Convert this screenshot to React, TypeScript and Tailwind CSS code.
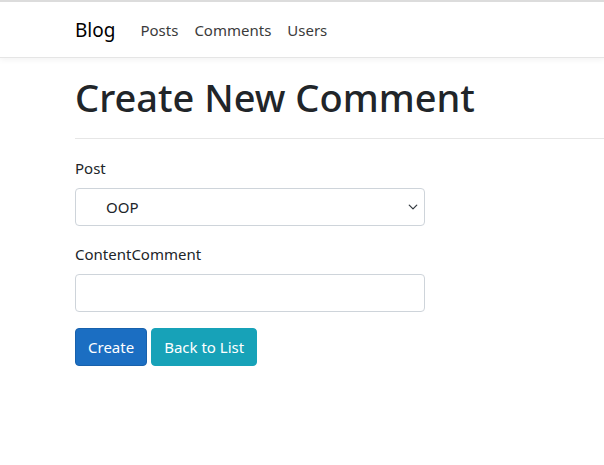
export default function App() {
  return (
    <div className="min-h-screen bg-white text-[#212529]" style={{ fontFamily: '"Noto Sans", "Open Sans", sans-serif' }}>
      {/* Navbar */}
      <header className="border-t-2 border-[#dcdcdc] border-b border-b-[#e5e5e5] shadow-[0_2px_6px_rgba(0,0,0,0.05)] bg-white">
        <nav className="flex items-center h-[55px] pl-[75px] pt-[2px]">
          <span className="text-[19px] text-black mr-[25px]">Blog</span>
          <div className="flex items-center gap-[16px] text-[15px] text-[#3b3b3b]">
            <span>Posts</span>
            <span>Comments</span>
            <span>Users</span>
          </div>
        </nav>
      </header>

      <main className="pl-[75px]">
        <h1 className="text-[38px] font-medium leading-[1.2] mt-[17px] mb-[17px]">Create New Comment</h1>
        <hr className="border-t border-[#e6e6e6]" />

        <form className="w-[350px] mt-[17px] text-[15px] leading-[24px]">
          <div className="mb-[16px]">
            <label className="block mb-[8px]">Post</label>
            <div className="relative">
              <select className="w-full h-[38px] appearance-none rounded-[4px] border border-[#ced4da] bg-white pl-[30px] pr-[36px] text-[15px] text-[#212529]">
                <option>OOP</option>
              </select>
              <svg className="absolute right-[6px] top-[14px] pointer-events-none" width="12" height="10" viewBox="0 0 16 16">
                <path d="M2 5l6 6 6-6" fill="none" stroke="#343a40" strokeWidth="2" strokeLinecap="round" strokeLinejoin="round" />
              </svg>
            </div>
          </div>

          <div className="mb-[16px]">
            <label className="block mb-[8px]">ContentComment</label>
            <input className="w-full h-[38px] rounded-[4px] border border-[#ced4da] bg-white px-[12px]" />
          </div>

          <div className="flex gap-[4px]">
            <button type="button" className="h-[38px] px-[12px] rounded-[4px] bg-[#1b6ec2] border border-[#1861ac] text-white">
              Create
            </button>
            <button type="button" className="h-[38px] px-[12px] rounded-[4px] bg-[#17a2b8] border border-[#17a2b8] text-white">
              Back to List
            </button>
          </div>
        </form>
      </main>
    </div>
  );
}
